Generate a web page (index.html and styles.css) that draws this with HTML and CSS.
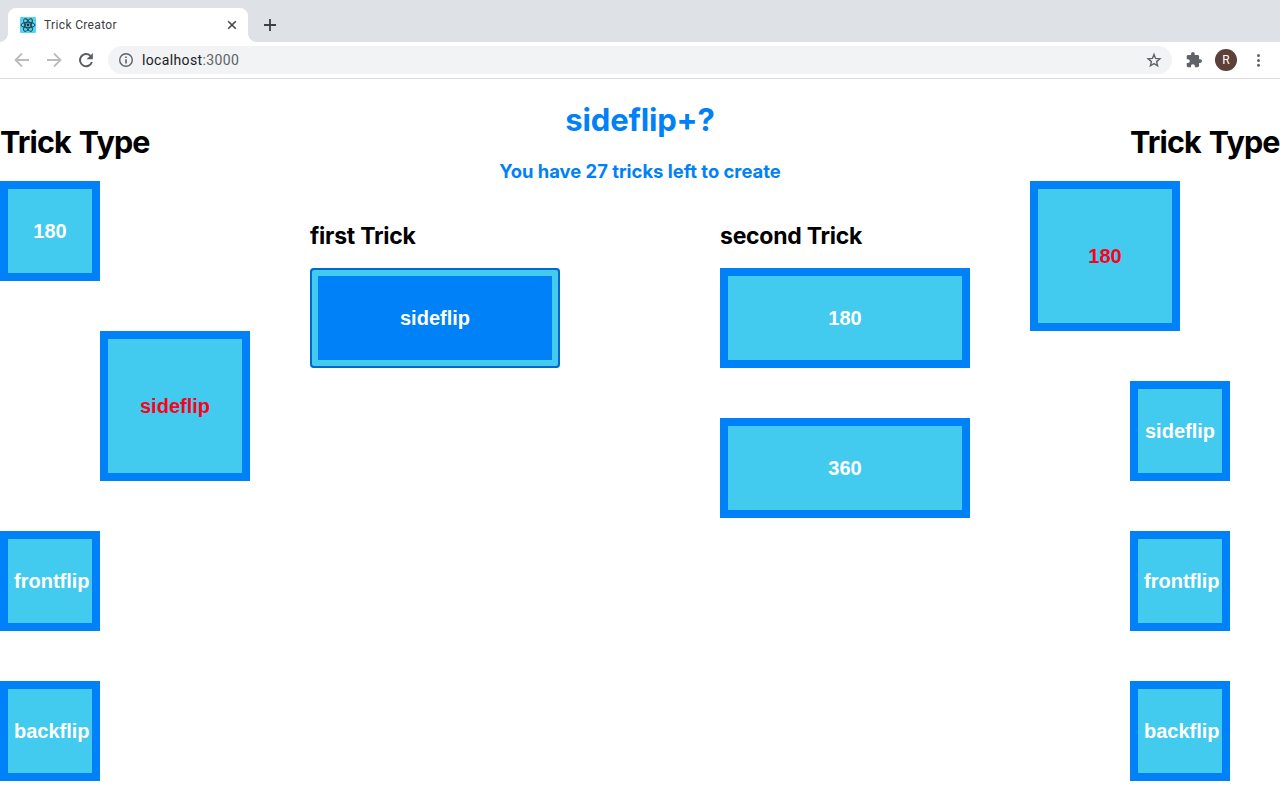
FILE: index.html
```html
<!DOCTYPE html>
<html lang="en">
<head>
<meta charset="utf-8">
<title>Trick Creator</title>
<link rel="stylesheet" href="styles.css">
</head>
<body>
<header class="browser">
  <div class="tabstrip">
    <div class="tab">
      <svg class="favicon" width="16" height="16" viewBox="0 0 16 16">
        <rect width="16" height="16" rx="1" fill="#53d5f5"/>
        <g fill="none" stroke="#20343c" stroke-width="0.9">
          <ellipse cx="8" cy="8" rx="7" ry="2.7"/>
          <ellipse cx="8" cy="8" rx="7" ry="2.7" transform="rotate(60 8 8)"/>
          <ellipse cx="8" cy="8" rx="7" ry="2.7" transform="rotate(120 8 8)"/>
        </g>
        <circle cx="8" cy="8" r="1.4" fill="#20343c"/>
      </svg>
      <span class="tab-title">Trick Creator</span>
      <svg class="tab-close" width="16" height="16" viewBox="0 0 16 16"><path d="M4.200 4.200l7.600 7.600M11.800 4.200l-7.600 7.600" stroke="#45484c" stroke-width="1.6"/></svg>
    </div>
    <svg class="new-tab" width="16" height="16" viewBox="0 0 16 16"><path d="M8 2v12M2 8h12" stroke="#3c4043" stroke-width="1.8"/></svg>
  </div>
  <div class="toolbar">
    <svg width="16" height="16" viewBox="0 0 16 16" fill="none" stroke="#babcbe" stroke-width="1.8"><path d="M15 8H2M8 1.500L1.500 8 8 14.500"/></svg>
    <svg width="16" height="16" viewBox="0 0 16 16" fill="none" stroke="#babcbe" stroke-width="1.8"><path d="M1 8h13M8 1.500L14.500 8 8 14.500"/></svg>
    <svg width="16" height="16" viewBox="0 0 16 16"><path d="M13.900 10A6.100 6.100 0 1 1 12.300 3.700" fill="none" stroke="#5a5d61" stroke-width="2"/><path d="M14.800 1v6.200H8.600z" fill="#5a5d61"/></svg>
    <div class="omnibox">
      <svg width="16" height="16" viewBox="0 0 16 16"><circle cx="8" cy="8" r="6.300" fill="none" stroke="#5f6368" stroke-width="1.400"/><path d="M8 7.200v4.200M8 4.500v1.600" stroke="#5f6368" stroke-width="1.600"/></svg>
      <span class="url">localhost<span class="port">:3000</span></span>
      <svg width="16" height="16" viewBox="0 0 16 16"><path d="M8 2.400l1.600 4 4.300.4-3.300 2.800 1 4.200L8 11.600l-3.600 2.200 1-4.200-3.300-2.800 4.300-.4z" fill="none" stroke="#5f6368" stroke-width="1.400"/></svg>
    </div>
    <svg class="extensions" width="16" height="16" viewBox="1 1 22 22"><path fill="#5f6368" d="M20.500 11H19V7c0-1.100-.9-2-2-2h-4V3.500a2.500 2.500 0 0 0-5 0V5H4c-1.100 0-2 .9-2 2v3.800h1.500c1.500 0 2.700 1.200 2.700 2.700S5 16.200 3.500 16.200H2V20c0 1.100.9 2 2 2h3.800v-1.500c0-1.500 1.200-2.700 2.700-2.700s2.700 1.200 2.700 2.700V22H17c1.100 0 2-.9 2-2v-4h1.500a2.500 2.500 0 0 0 0-5z"/></svg>
    <span class="avatar">R</span>
    <svg class="menu" width="16" height="16" viewBox="0 0 16 16" fill="#5f6368"><circle cx="8.500" cy="3.500" r="1.500"/><circle cx="8.500" cy="8.500" r="1.500"/><circle cx="8.500" cy="13.300" r="1.500"/></svg>
  </div>
</header>
<main class="app">
  <section class="types">
    <h1>Trick Type</h1>
    <button class="trick">180</button>
    <button class="trick active from-left">sideflip</button>
    <button class="trick">frontflip</button>
    <button class="trick">backflip</button>
  </section>
  <section class="creator">
    <h1 class="result">sideflip+?</h1>
    <h3 class="remaining">You have 27 tricks left to create</h3>
    <div class="choices">
      <div class="choice">
        <h2>first Trick</h2>
        <button class="trick wide selected">sideflip</button>
      </div>
      <div class="choice">
        <h2>second Trick</h2>
        <button class="trick wide">180</button>
        <button class="trick wide">360</button>
      </div>
    </div>
  </section>
  <section class="types">
    <h1>Trick Type</h1>
    <button class="trick active from-right">180</button>
    <button class="trick">sideflip</button>
    <button class="trick">frontflip</button>
    <button class="trick">backflip</button>
  </section>
</main>
</body>
</html>
```
FILE: styles.css
```css
* { box-sizing: border-box; }
body { margin: 0; height: 800px; overflow: hidden; background: #fff; color: #000; font-family: Inter, "Liberation Sans", sans-serif; }
svg { display: block; flex: none; }

.browser { font-family: Roboto, sans-serif; }
.tabstrip { display: flex; align-items: flex-end; height: 42px; padding-left: 8px; background: #dee1e6; }
.tab { position: relative; display: flex; align-items: center; width: 240px; height: 34px; padding: 0 8px 0 12px; background: #fff; border-radius: 8px 8px 0 0; }
.tab::before, .tab::after { content: ""; position: absolute; bottom: 0; width: 8px; height: 8px; }
.tab::before { left: -8px; background: radial-gradient(circle at 0 0, transparent 7.5px, #fff 8px); }
.tab::after { right: -8px; background: radial-gradient(circle at 100% 0, transparent 7.5px, #fff 8px); }
.tab-title { flex: 1; margin-left: 8px; font-size: 12px; line-height: 16px; color: #3c4043; letter-spacing: 0.35px; }
.new-tab { margin: 0 0 9px 14px; }
.toolbar { display: flex; align-items: center; gap: 16px; height: 37px; padding: 0 14px; border-bottom: 1px solid #dadce0; }
.omnibox { display: flex; align-items: center; width: 1064px; height: 28px; margin-left: -2px; padding: 0 10px; border-radius: 14px; background: #f1f3f4; }
.url { flex: 1; margin-left: 8px; font-size: 14px; color: #202124; letter-spacing: 0.36px; }
.port { color: #5f6368; }
.extensions { margin-left: -2px; }
.avatar { width: 22px; height: 22px; margin-left: -3px; border-radius: 50%; background: #5d4037; color: #fff; font-size: 12px; line-height: 22px; text-align: center; }
.menu { margin-left: -3px; }

.app { display: flex; justify-content: space-between; }
.types { display: flex; flex-direction: column; align-items: flex-start; gap: 50px; width: 150px; padding-top: 43px; }
.types h1 { height: 38px; margin: 0 0 -29px; letter-spacing: -0.85px; word-spacing: 1.5px; }
h1 { font-size: 30.5px; line-height: 40px; font-weight: 650; white-space: nowrap; }
.trick { width: 100px; height: 100px; flex: none; padding: 1px 6px; border: 8px solid #0081f7; border-radius: 0; background: #42caef; color: #fff; font: bold 20px/23px "Liberation Sans", Arial, sans-serif; }
.active { width: 150px; height: 150px; color: #ff001a; }
.from-left { margin-left: 100px; }
.from-right { margin-left: -100px; }
.wide { width: 250px; }
.selected { border-color: #42caef; background: #0081f7; outline: 2px solid #0067cf; outline-offset: -2px; border-radius: 4px; }

.creator { width: 660px; padding-top: 21px; }
.result, .remaining { margin: 0; color: #0081f7; text-align: center; }
.result { font-size: 31px; letter-spacing: -0.15px; }
.remaining { margin-top: 20px; font-size: 18.4px; line-height: 22px; font-weight: 650; letter-spacing: 0; }
.choices { display: flex; gap: 160px; margin-top: 40px; }
.choice { display: flex; flex-direction: column; width: 250px; }
.choice h2 { margin: 0 0 17px; font-size: 23px; line-height: 29px; font-weight: 650; letter-spacing: -0.25px; white-space: nowrap; }
.choice .trick + .trick { margin-top: 50px; }
```
